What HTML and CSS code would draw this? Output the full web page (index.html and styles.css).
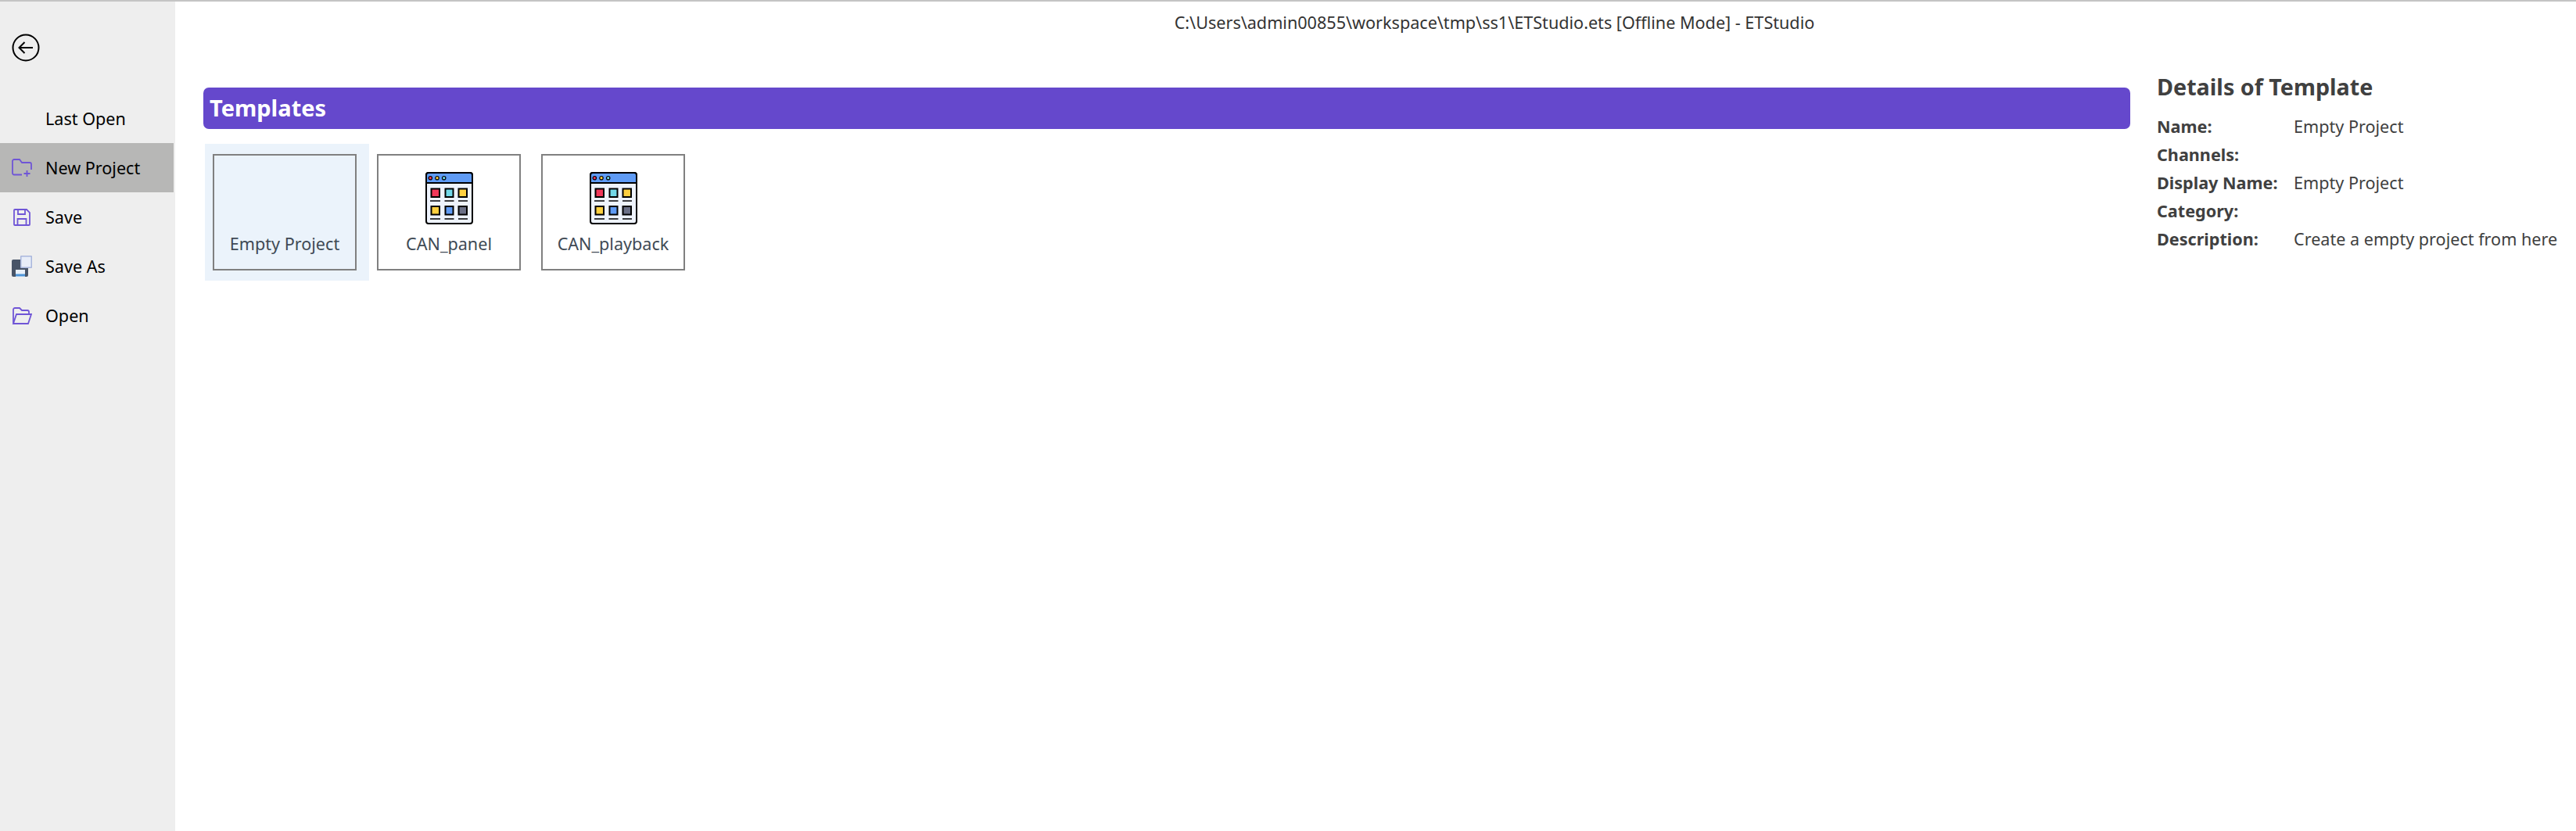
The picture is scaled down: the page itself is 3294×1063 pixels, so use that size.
FILE: index.html
```html
<!DOCTYPE html>
<html lang="en">
<head>
<meta charset="utf-8">
<title>ETStudio</title>
<link rel="stylesheet" href="styles.css">
</head>
<body>
<svg class="defs" width="0" height="0" aria-hidden="true">
  <symbol id="panel" viewBox="0 0 61 67">
    <rect x="1" y="1" width="59" height="65" rx="3" fill="#eef3fd" stroke="#000" stroke-width="2"/>
    <path d="M1 14V4a3 3 0 0 1 3-3h53a3 3 0 0 1 3 3v10z" fill="#5f9bf5" stroke="#000" stroke-width="2"/>
    <circle cx="6.3" cy="7.7" r="2.2" fill="#f0385a" stroke="#000" stroke-width="1.2"/>
    <circle cx="15" cy="7.7" r="2.2" fill="#ffd040" stroke="#000" stroke-width="1.2"/>
    <circle cx="23.7" cy="7.7" r="2.2" fill="#72d8e8" stroke="#000" stroke-width="1.2"/>
    <g stroke="#000" stroke-width="2">
      <rect x="7.5" y="21.5" width="10.5" height="10.5" fill="#f0385a"/>
      <rect x="25.5" y="21.5" width="10" height="10.5" fill="#72d8e8"/>
      <rect x="42.5" y="21.5" width="10.5" height="10.5" fill="#ffd040"/>
      <rect x="7.5" y="44" width="10.5" height="10.5" fill="#ffd040"/>
      <rect x="25.5" y="44" width="10" height="10.5" fill="#5f9bf5"/>
      <rect x="42.5" y="44" width="10.5" height="10.5" fill="#6b7087"/>
      <path d="M6 37h13M24.500 37h12M42 37h12M6 60h13M24.500 60h12M42 60h12" fill="none" stroke-width="1.600"/>
    </g>
  </symbol>
</svg>
<div class="app">
  <aside class="sidebar">
    <svg class="back" width="36" height="36" viewBox="0 0 36 36" fill="none" stroke="#000" stroke-width="2">
      <circle cx="18" cy="18" r="16.500"/>
      <path d="M27 18H9.500M16.500 11l-7 7 7 7"/>
    </svg>
    <div class="nav-item">
      <span class="nav-icon"></span><span>Last Open</span>
    </div>
    <div class="nav-item active">
      <span class="nav-icon">
        <svg width="26" height="24" viewBox="0 0 26 24" fill="none" stroke="#6f55d6" stroke-width="1.800">
          <path d="M13 20.500H3a2 2 0 0 1-2-2V3a2 2 0 0 1 2-2h7l3 4h10a2 2 0 0 1 2 2v7"/>
          <path d="M19.500 15v8M15.500 19h8"/>
        </svg>
      </span><span>New Project</span>
    </div>
    <div class="nav-item">
      <span class="nav-icon">
        <svg width="26" height="24" viewBox="0 0 26 24" fill="none" stroke="#6f55d6" stroke-width="1.800">
          <path d="M4 2h15l4 4v15a1 1 0 0 1-1 1H4a1 1 0 0 1-1-1V3a1 1 0 0 1 1-1z"/>
          <path d="M8 2v6h9V2M7.500 22v-8h11v8"/>
        </svg>
      </span><span>Save</span>
    </div>
    <div class="nav-item">
      <span class="nav-icon">
        <svg width="26" height="27" viewBox="0 0 26 27">
          <rect x="0" y="5" width="21" height="22" rx="2" fill="#485467"/>
          <rect x="5" y="18" width="12" height="9" fill="#e8f0fa"/>
          <rect x="5" y="23.500" width="12" height="3" fill="#4f95d8"/>
          <rect x="11" y="0" width="15" height="16" rx="1" fill="#a9b6dc"/>
          <rect x="12.500" y="1.500" width="12" height="13" fill="#e8edf8"/>
        </svg>
      </span><span>Save As</span>
    </div>
    <div class="nav-item">
      <span class="nav-icon">
        <svg width="26" height="22" viewBox="0 0 26 22" fill="none" stroke="#6f55d6" stroke-width="1.800">
          <path d="M2 20V3a2 2 0 0 1 2-2h6l3 3h7a2 2 0 0 1 2 2v2"/>
          <path d="M2 21l4-12h19l-4 12z"/>
        </svg>
      </span><span>Open</span>
    </div>
  </aside>
  <main class="main">
    <div class="window-title">C:\Users\admin00855\workspace\tmp\ss1\ETStudio.ets [Offline Mode] - ETStudio</div>
    <div class="content">
      <section class="templates">
        <h2 class="templates-head">Templates</h2>
        <div class="template-list">
          <div class="template selected">
            <div class="card">
              <span class="card-icon"></span>
              <span class="card-label">Empty Project</span>
            </div>
          </div>
          <div class="template">
            <div class="card">
              <svg class="card-icon" width="61" height="67"><use href="#panel"/></svg>
              <span class="card-label">CAN_panel</span>
            </div>
          </div>
          <div class="template">
            <div class="card">
              <svg class="card-icon" width="61" height="67"><use href="#panel"/></svg>
              <span class="card-label">CAN_playback</span>
            </div>
          </div>
        </div>
      </section>
      <section class="details">
        <h2 class="details-head">Details of Template</h2>
        <dl class="details-list">
          <dt>Name:</dt><dd>Empty Project</dd>
          <dt>Channels:</dt><dd></dd>
          <dt>Display Name:</dt><dd>Empty Project</dd>
          <dt>Category:</dt><dd></dd>
          <dt>Description:</dt><dd>Create a empty project from here</dd>
        </dl>
      </section>
    </div>
  </main>
</div>
</body>
</html>
```
FILE: styles.css
```css
* { box-sizing: border-box; }
html, body { margin: 0; padding: 0; background: #fff; }
body { font-family: "Noto Sans", "Open Sans", sans-serif; font-size: 21.600px; color: #000; }
.defs { position: absolute; }
.app { display: flex; height: 1063px; border-top: 2px solid #c4c4c4; }

.sidebar { width: 224px; flex: none; background: #eee; padding-top: 41px; }
.back { display: block; margin: 0 0 41px 15px; }
.nav-item { display: flex; align-items: center; height: 63px; width: 222px; padding-left: 15px; }
.nav-item span:last-child { margin-left: -1px; }
.nav-item.active { background: #b7b7b6; }
.nav-icon { display: flex; align-items: center; width: 44px; flex: none; }

.main { flex: 1; min-width: 0; }
.window-title { height: 54px; padding-left: 304px; line-height: 54px; text-align: center; color: #333; }
.content { display: flex; margin-top: 36px; padding-left: 36px; }

.templates { width: 2464px; flex: none; padding-top: 20px; }
.templates-head { margin: 0; height: 53px; line-height: 51px; padding-left: 8px; background: #6548cc; border-radius: 7px; color: #fff; font-size: 29px; font-weight: 700; }
.template-list { display: flex; margin: 19px 0 0 2px; }
.template { width: 210px; height: 175px; padding: 13px 16px 13px 10px; }
.template.selected { background: #ebf3fb; }
.card { display: flex; flex-direction: column; align-items: center; width: 184px; height: 149px; border: 2px solid #808080; padding-top: 21px; }
.card-icon { display: block; width: 61px; height: 67px; }
.card-label { margin-top: 10px; line-height: 30px; color: #404a55; }

.details { margin-left: 34px; color: #404040; }
.details-head { margin: 0; height: 40px; line-height: 38px; font-size: 28.700px; font-weight: 700; }
.details-list { display: grid; grid-template-columns: 175px auto; grid-auto-rows: 36px; margin: 12px 0 0; line-height: 35px; }
.details-list dt { font-weight: 700; }
.details-list dd { margin: 0; }
```
